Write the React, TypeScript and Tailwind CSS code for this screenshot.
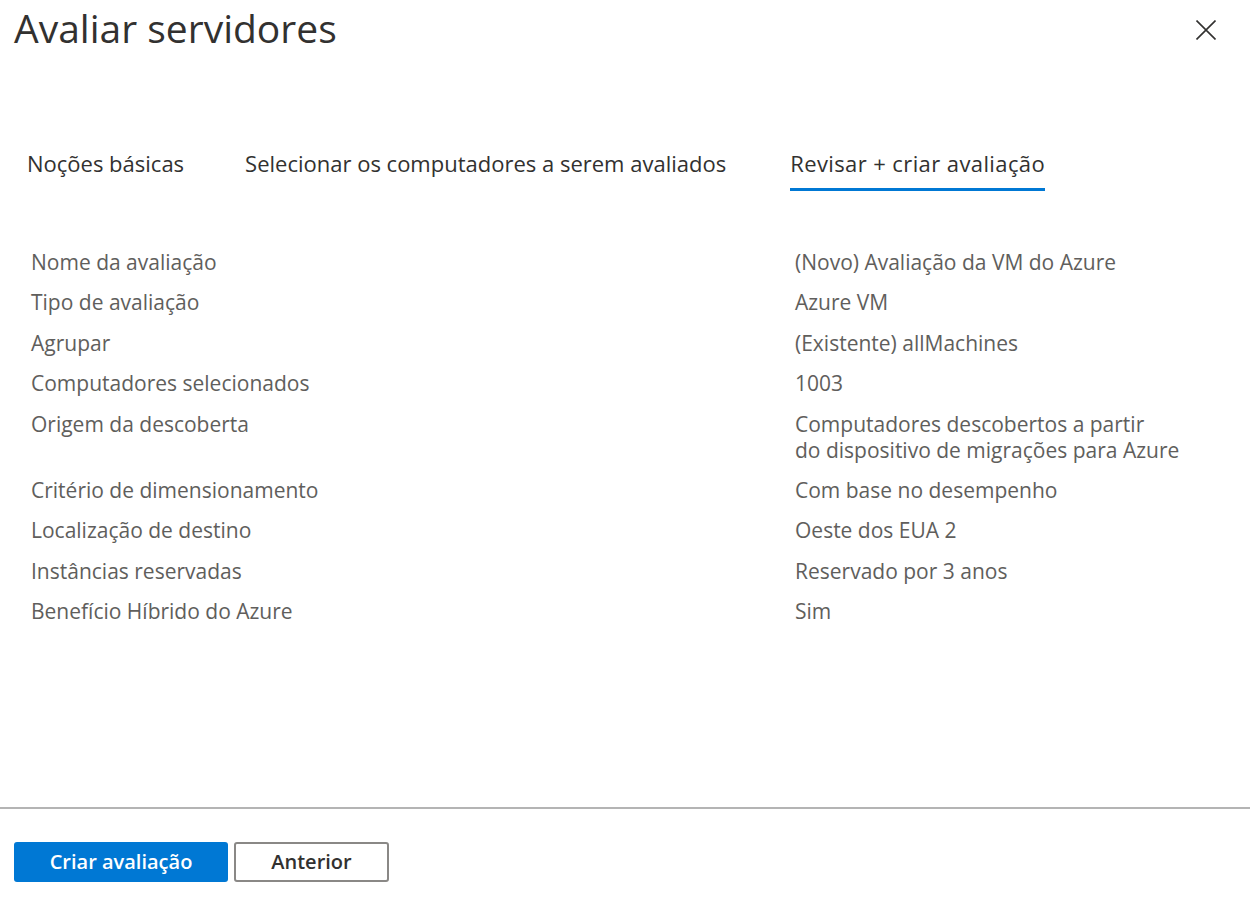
const rows: { label: string; value: string[] }[] = [
  { label: "Nome da avaliação", value: ["(Novo) Avaliação da VM do Azure"] },
  { label: "Tipo de avaliação", value: ["Azure VM"] },
  { label: "Agrupar", value: ["(Existente) allMachines"] },
  { label: "Computadores selecionados", value: ["1003"] },
  {
    label: "Origem da descoberta",
    value: ["Computadores descobertos a partir", "do dispositivo de migrações para Azure"],
  },
  { label: "Critério de dimensionamento", value: ["Com base no desempenho"] },
  { label: "Localização de destino", value: ["Oeste dos EUA 2"] },
  { label: "Instâncias reservadas", value: ["Reservado por 3 anos"] },
  { label: "Benefício Híbrido do Azure", value: ["Sim"] },
];

export default function App() {
  return (
    <div
      className="w-[1250px] h-[903px] bg-white flex flex-col text-[#323130] overflow-hidden"
      style={{ fontFamily: '"Open Sans", "Noto Sans", sans-serif' }}
    >
      {/* Header */}
      <div className="flex items-start justify-between pl-[14px] pr-[34px]">
        <h1 className="text-[39px] leading-[56px]">Avaliar servidores</h1>
        <button className="mt-[20px] text-[#323130]">
          <svg width="20" height="20" viewBox="0 0 20 20" fill="none" stroke="currentColor" strokeWidth="1.6">
            <path d="M0.5 0.5L19.5 19.5M19.5 0.5L0.5 19.5" />
          </svg>
        </button>
      </div>

      {/* Tabs */}
      <div className="flex mt-[92px] pl-[27px] text-[22px]">
        <div className="pb-[13px] leading-[30px]">Noções básicas</div>
        <div className="ml-[61px] pb-[13px] leading-[30px]">Selecionar os computadores a serem avaliados</div>
        <div className="ml-[64px] pb-[10px] leading-[30px] tracking-[0.4px] border-b-[3px] border-[#0078d4]">
          Revisar + criar avaliação
        </div>
      </div>

      {/* Summary */}
      <div className="flex flex-col gap-[14.4px] mt-[58px] pl-[31px] text-[21px] leading-[26px] text-[#605e5c]">
        {rows.map((r) => (
          <div key={r.label} className="flex">
            <div className="w-[764px] shrink-0">{r.label}</div>
            <div>
              {r.value.map((v) => (
                <div key={v}>{v}</div>
              ))}
            </div>
          </div>
        ))}
      </div>

      <div className="flex-1" />

      {/* Footer */}
      <div className="border-t-2 border-[#b4b4b4] h-[96px] pl-[14px] pt-[33px] flex gap-[6px] items-start">
        <button className="w-[214px] h-[40px] rounded-[3px] bg-[#0078d4] text-white text-[20px] font-semibold">
          Criar avaliação
        </button>
        <button className="w-[155px] h-[40px] rounded-[3px] border-2 border-[#8a8886] bg-white text-[#323130] text-[20px] font-semibold">
          Anterior
        </button>
      </div>
    </div>
  );
}
